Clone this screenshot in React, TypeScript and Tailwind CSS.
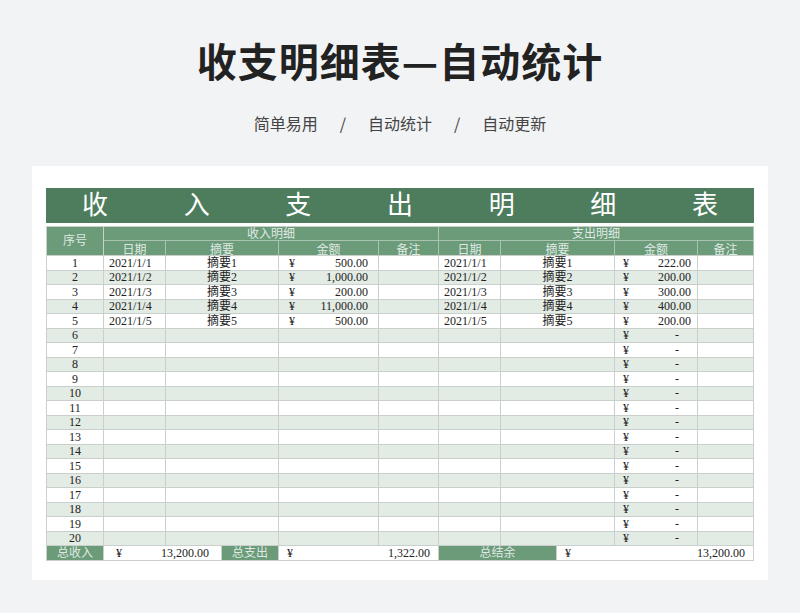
import React from 'react';

const font = { fontFamily: '"Liberation Serif", "Noto Sans CJK SC", serif' };

const inc = [
  ['2021/1/1', '摘要1', '500.00'],
  ['2021/1/2', '摘要2', '1,000.00'],
  ['2021/1/3', '摘要3', '200.00'],
  ['2021/1/4', '摘要4', '11,000.00'],
  ['2021/1/5', '摘要5', '500.00'],
];
const exp = [
  ['2021/1/1', '摘要1', '222.00'],
  ['2021/1/2', '摘要2', '200.00'],
  ['2021/1/3', '摘要3', '300.00'],
  ['2021/1/4', '摘要4', '400.00'],
  ['2021/1/5', '摘要5', '200.00'],
];

const cell = 'border-r border-[#c9cfcb] h-full flex items-center';

export default function App() {
  return (
    <div className="w-[800px] h-[613px] bg-[#f2f3f5] flex flex-col items-center" style={{ fontFamily: '"Noto Sans CJK SC", sans-serif' }}>
      <h1 className="mt-[33px] text-[40px] leading-[54px] font-bold text-[#222] tracking-wide">收支明细表—自动统计</h1>
      <div className="mt-[24px] flex gap-[22px] text-[16px] text-[#444]">
        <span>简单易用</span><span>/</span><span>自动统计</span><span>/</span><span>自动更新</span>
      </div>
      <div className="mt-[31px] w-[736px] h-[414px] bg-white pt-[22px] px-[14px]" style={font}>
        <div className="h-[35px] bg-[#4d7d5d] flex items-center justify-between px-[36px] text-[26px] text-white">
          {'收入支出明细表'.split('').map((c) => <span key={c}>{c}</span>)}
        </div>
        <div className="mt-[3px] border-l border-t border-[#c9cfcb] text-[12px] text-[#222]">
          <div className="flex h-[29px] bg-[#6c9b7a] text-[#dfe9e2] border-b border-[#c9cfcb]">
            <div className={`${cell} w-[57px] justify-center`}>序号</div>
            {['收入明细', '支出明细'].map((t, k) => (
              <div key={t} className={`flex flex-col ${k === 0 ? 'w-[335px]' : 'w-[315px]'}`}>
                <div className="h-[14px] border-b border-r border-[#a9c4b1] flex items-center justify-center">{t}</div>
                <div className="flex flex-1">
                  {(k === 0 ? [62, 113, 100, 60] : [62, 114, 83, 56]).map((w, i) => (
                    <div key={i} className="border-r border-[#a9c4b1] flex items-center justify-center" style={{ width: w }}>
                      {['日期', '摘要', '金额', '备注'][i]}
                    </div>
                  ))}
                </div>
              </div>
            ))}
          </div>
          {Array.from({ length: 20 }, (_, r) => {
            const a = inc[r];
            const b = exp[r];
            return (
              <div key={r} className={`flex h-[14.5px] border-b border-[#c9cfcb] ${r % 2 ? 'bg-[#e3ebe5]' : 'bg-white'}`}>
                <div className={`${cell} w-[57px] justify-center`}>{r + 1}</div>
                <div className={`${cell} w-[62px] pl-[5px]`}>{a?.[0]}</div>
                <div className={`${cell} w-[113px] justify-center`}>{a?.[1]}</div>
                <div className={`${cell} w-[100px] px-[10px] justify-between`}>{a && <><span>¥</span><span>{a[2]}</span></>}</div>
                <div className={`${cell} w-[60px]`} />
                <div className={`${cell} w-[62px] pl-[5px]`}>{b?.[0]}</div>
                <div className={`${cell} w-[114px] justify-center`}>{b?.[1]}</div>
                <div className={`${cell} w-[83px] pl-[8px] pr-[6px] justify-between`}><span>¥</span><span className={b ? '' : 'pr-[12px]'}>{b ? b[2] : '-'}</span></div>
                <div className={`${cell} w-[56px]`} />
              </div>
            );
          })}
          <div className="flex h-[15px] border-b border-[#c9cfcb]">
            <div className={`${cell} w-[57px] justify-center bg-[#6c9b7a] text-[#dfe9e2]`}>总收入</div>
            <div className={`${cell} w-[118px] px-[12px] justify-between`}><span>¥</span><span>13,200.00</span></div>
            <div className={`${cell} w-[57px] justify-center bg-[#6c9b7a] text-[#dfe9e2]`}>总支出</div>
            <div className={`${cell} w-[160px] px-[8px] justify-between`}><span>¥</span><span>1,322.00</span></div>
            <div className={`${cell} w-[118px] justify-center bg-[#6c9b7a] text-[#dfe9e2]`}>总结余</div>
            <div className={`${cell} w-[197px] px-[8px] justify-between`}><span>¥</span><span>13,200.00</span></div>
          </div>
        </div>
      </div>
    </div>
  );
}
